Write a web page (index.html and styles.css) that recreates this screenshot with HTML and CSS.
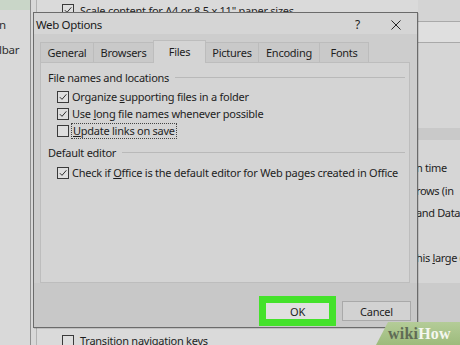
FILE: index.html
```html
<!DOCTYPE html>
<html>
<head>
<meta charset="utf-8">
<link rel="stylesheet" href="styles.css">
</head>
<body>
<div class="app">
  <aside class="sidebar">
    <div class="side-accent"></div>
    <div class="side-item first">n</div>
    <div class="side-item">lbar</div>
  </aside>
  <div class="pane">
    <div class="pane-main">
      <div class="bg-row">
        <span class="cb"><svg viewBox="0 0 12 12"><path d="M2.2 6.2 L4.8 8.8 L10 2.8"/></svg></span>
        <span>Scale content for A4 or 8.5 x 11" paper sizes</span>
      </div>
      <div class="bg-row last">
        <span class="cb"></span>
        <span>Transition navigation keys</span>
      </div>
    </div>
    <div class="pane-side">
      <div class="ps-top"></div>
      <div class="ps-head"></div>
      <div class="ps-gap"></div>
      <div class="ps-band"></div>
      <div class="ps-rows">
        <div class="ps-row">n time</div>
        <div class="ps-row">rows (in</div>
        <div class="ps-row">and Data</div>
        <div class="ps-row"></div>
        <div class="ps-row">his <u>l</u>arge (</div>
      </div>
      <div class="ps-band2"></div>
    </div>
  </div>
</div>

<div class="dialog">
  <div class="titlebar">
    <span class="title">Web Options</span>
    <span class="help">?</span>
    <svg class="close" viewBox="0 0 11 11"><path d="M0.5 0.5 L10.5 10.5 M10.5 0.5 L0.5 10.5"/></svg>
  </div>
  <div class="tabs">
    <div class="tab w-general">General</div>
    <div class="tab w-browsers">Browsers</div>
    <div class="tab active w-files">Files</div>
    <div class="tab w-pictures">Pictures</div>
    <div class="tab w-encoding">Encoding</div>
    <div class="tab w-fonts">Fonts</div>
  </div>
  <div class="panel">
    <div class="group"><span>File names and locations</span><i class="rule"></i></div>
    <div class="opt">
      <span class="cb"><svg viewBox="0 0 12 12"><path d="M2.2 6.2 L4.8 8.8 L10 2.8"/></svg></span>
      <span>Organize <u>s</u>upporting files in a folder</span>
    </div>
    <div class="opt">
      <span class="cb"><svg viewBox="0 0 12 12"><path d="M2.2 6.2 L4.8 8.8 L10 2.8"/></svg></span>
      <span>Use <u>l</u>ong file names whenever possible</span>
    </div>
    <div class="opt">
      <span class="cb"></span>
      <span class="focus"><u>U</u>pdate links on save</span>
    </div>
    <div class="group second"><span>Default editor</span><i class="rule"></i></div>
    <div class="opt">
      <span class="cb"><svg viewBox="0 0 12 12"><path d="M2.2 6.2 L4.8 8.8 L10 2.8"/></svg></span>
      <span>Check if <u>O</u>ffice is the default editor for Web pages created in Office</span>
    </div>
  </div>
  <div class="buttons">
    <button class="btn ok">OK</button>
    <button class="btn cancel">Cancel</button>
  </div>
</div>

<div class="watermark"><span class="wm-wiki">wiki</span><span class="wm-how">How</span></div>
</body>
</html>
```

FILE: styles.css
```css
* { box-sizing: border-box; }

body {
  margin: 0;
  width: 460px;
  height: 345px;
  overflow: hidden;
  position: relative;
  background: #d8d8d8;
  font-family: "Noto Sans", "Open Sans", sans-serif;
  font-size: 11px;
  letter-spacing: -0.25px;
  color: #1e1e1e;
}

u { text-decoration: underline; text-underline-offset: 1px; }

/* ---------- background Excel options window ---------- */
.app {
  display: flex;
  height: 345px;
}

.sidebar {
  width: 31px;
  flex: none;
  background: #d9d9d9;
  border-right: 1px solid #8e8e8e;
  display: flex;
  flex-direction: column;
}

.side-accent {
  height: 10px;
  background: #c9d6c8;
}

.side-item {
  height: 24px;
  line-height: 24px;
  font-size: 11.5px;
  color: #303030;
  white-space: nowrap;
  margin-left: -1px;
}
.side-item.first { margin-top: 3px; }
.side-item + .side-item { margin-top: 1px; }

.pane {
  flex: 1;
  display: flex;
}

.pane-main {
  width: 382px;
  flex: none;
  margin-left: 5px;
  border-left: 1px solid #b2b2b2;
  background: #dadada;
  display: flex;
  flex-direction: column;
  justify-content: space-between;
  padding: 2px 0 0 25px;
}

.bg-row {
  display: flex;
  align-items: center;
  gap: 6px;
  height: 15px;
  white-space: nowrap;
}
.bg-row:first-child span:last-child { margin-top: 2px; }
.bg-row.last { margin-bottom: -3px; }

.pane-side {
  flex: 1;
  display: flex;
  flex-direction: column;
  background: #d6d6d6;
}

.ps-top { height: 22px; background: #d4d4d4; border-bottom: 1px solid #a9a9a9; }
.ps-head { height: 21px; background: #dfdfdf; border-bottom: 1px solid #a9a9a9; }
.ps-gap { height: 85px; }
.ps-band { height: 12px; background: #c9c9c9; }
.ps-rows { padding-top: 17px; margin-left: -2px; }
.ps-row {
  height: 22.5px;
  line-height: 22.5px;
  white-space: nowrap;
  color: #1e1e1e;
  letter-spacing: -0.35px;
}
.ps-band2 { margin-top: 13px; height: 40px; background: #cbcbcb; }

/* ---------- checkbox ---------- */
.cb {
  width: 12px;
  height: 12px;
  flex: none;
  border: 1px solid #3a3a3a;
  background: #dedede;
  display: block;
}
.cb svg {
  display: block;
  width: 10px;
  height: 10px;
  fill: none;
  stroke: #1c1c1c;
  stroke-width: 1.1;
}

/* ---------- dialog ---------- */
.dialog {
  position: absolute;
  left: 33px;
  top: 12px;
  width: 385px;
  height: 316px;
  background: #cdcdcd;
  border: 1px solid #6b6b6b;
  box-shadow: 1px 1px 0 rgba(0,0,0,0.12);
  display: flex;
  flex-direction: column;
}

.titlebar {
  height: 21px;
  display: flex;
  align-items: center;
  padding: 2px 0 0 2px;
  background: #d5d5d5;
}
.title { font-size: 11.5px; letter-spacing: -0.35px; flex: 1; color: #1a1a1a; }
.help { font-size: 12px; margin-right: 31px; color: #222; }
.close {
  width: 10px;
  height: 10px;
  margin-right: 16px;
  fill: none;
  stroke: #262626;
  stroke-width: 1.1;
}

.tabs {
  display: flex;
  align-items: flex-end;
  height: 22px;
  margin-top: 6px;
  padding-left: 6px;
  position: relative;
  z-index: 1;
}
.tab {
  height: 20px;
  line-height: 20px;
  text-align: center;
  background: #c9c9c9;
  border: 1px solid #bcbcbc;
  border-bottom: none;
  color: #1e1e1e;
  white-space: nowrap;
}
.tab + .tab { margin-left: -1px; }
.tab.active {
  height: 23px;
  line-height: 22px;
  margin-bottom: -1px;
  background: #d4d4d4;
  border-color: #bdbdbd;
}
.w-general { width: 54px; }
.w-browsers { width: 61px; }
.w-files { width: 53px; }
.w-pictures { width: 54px; }
.w-encoding { width: 62px; }
.w-fonts { width: 50px; }

.panel {
  height: 221px;
  margin: 0 7px 0 6px;
  background: #d4d4d4;
  border: 1px solid #bdbdbd;
  padding: 7px 4px 0 7px;
}

.group {
  display: flex;
  align-items: center;
  height: 15px;
  line-height: 15px;
}
.group.second { margin-top: 6px; }
.rule {
  flex: 1;
  height: 1px;
  background: #b9b9b9;
  margin-left: 6px;
}

.opt {
  display: flex;
  align-items: center;
  gap: 3px;
  height: 17px;
  padding-left: 9px;
  white-space: nowrap;
}
.group + .opt { margin-top: 3px; }
.group.second + .opt { margin-top: 4px; }

.focus {
  outline: 1px dotted #444;
  outline-offset: 0;
  padding: 0 1px;
  line-height: 14px;
}

.buttons {
  flex: 1;
  display: flex;
  justify-content: flex-end;
  align-items: center;
  gap: 13px;
  padding: 12px 6px 0 0;
  background: #c8c8c8;
}

.btn {
  font-family: inherit;
  font-size: 11px;
  letter-spacing: -0.2px;
  color: #1e1e1e;
  padding: 0;
  margin: 0;
  cursor: default;
}
.btn.ok {
  width: 63px;
  height: 16px;
  background: #e0e0e0;
  border: none;
  outline: 7px solid #44e22b;
}
.btn.cancel {
  width: 69px;
  height: 20px;
  background: #d2d2d2;
  border: 1px solid #a9a9a9;
}

/* ---------- watermark ---------- */
.watermark {
  position: absolute;
  right: 0;
  bottom: 0;
  width: 84px;
  height: 23px;
  background: linear-gradient(#b4cc98, #9dbb7c);
  clip-path: polygon(12px 0, 100% 0, 100% 100%, 0 100%);
  font-family: "Liberation Serif", "DejaVu Serif", serif;
  font-weight: bold;
  font-size: 16px;
  line-height: 23px;
  padding-left: 12px;
  letter-spacing: 0.2px;
}
.wm-wiki { color: #5f6b55; }
.wm-how { color: #f4f7ef; }
```
